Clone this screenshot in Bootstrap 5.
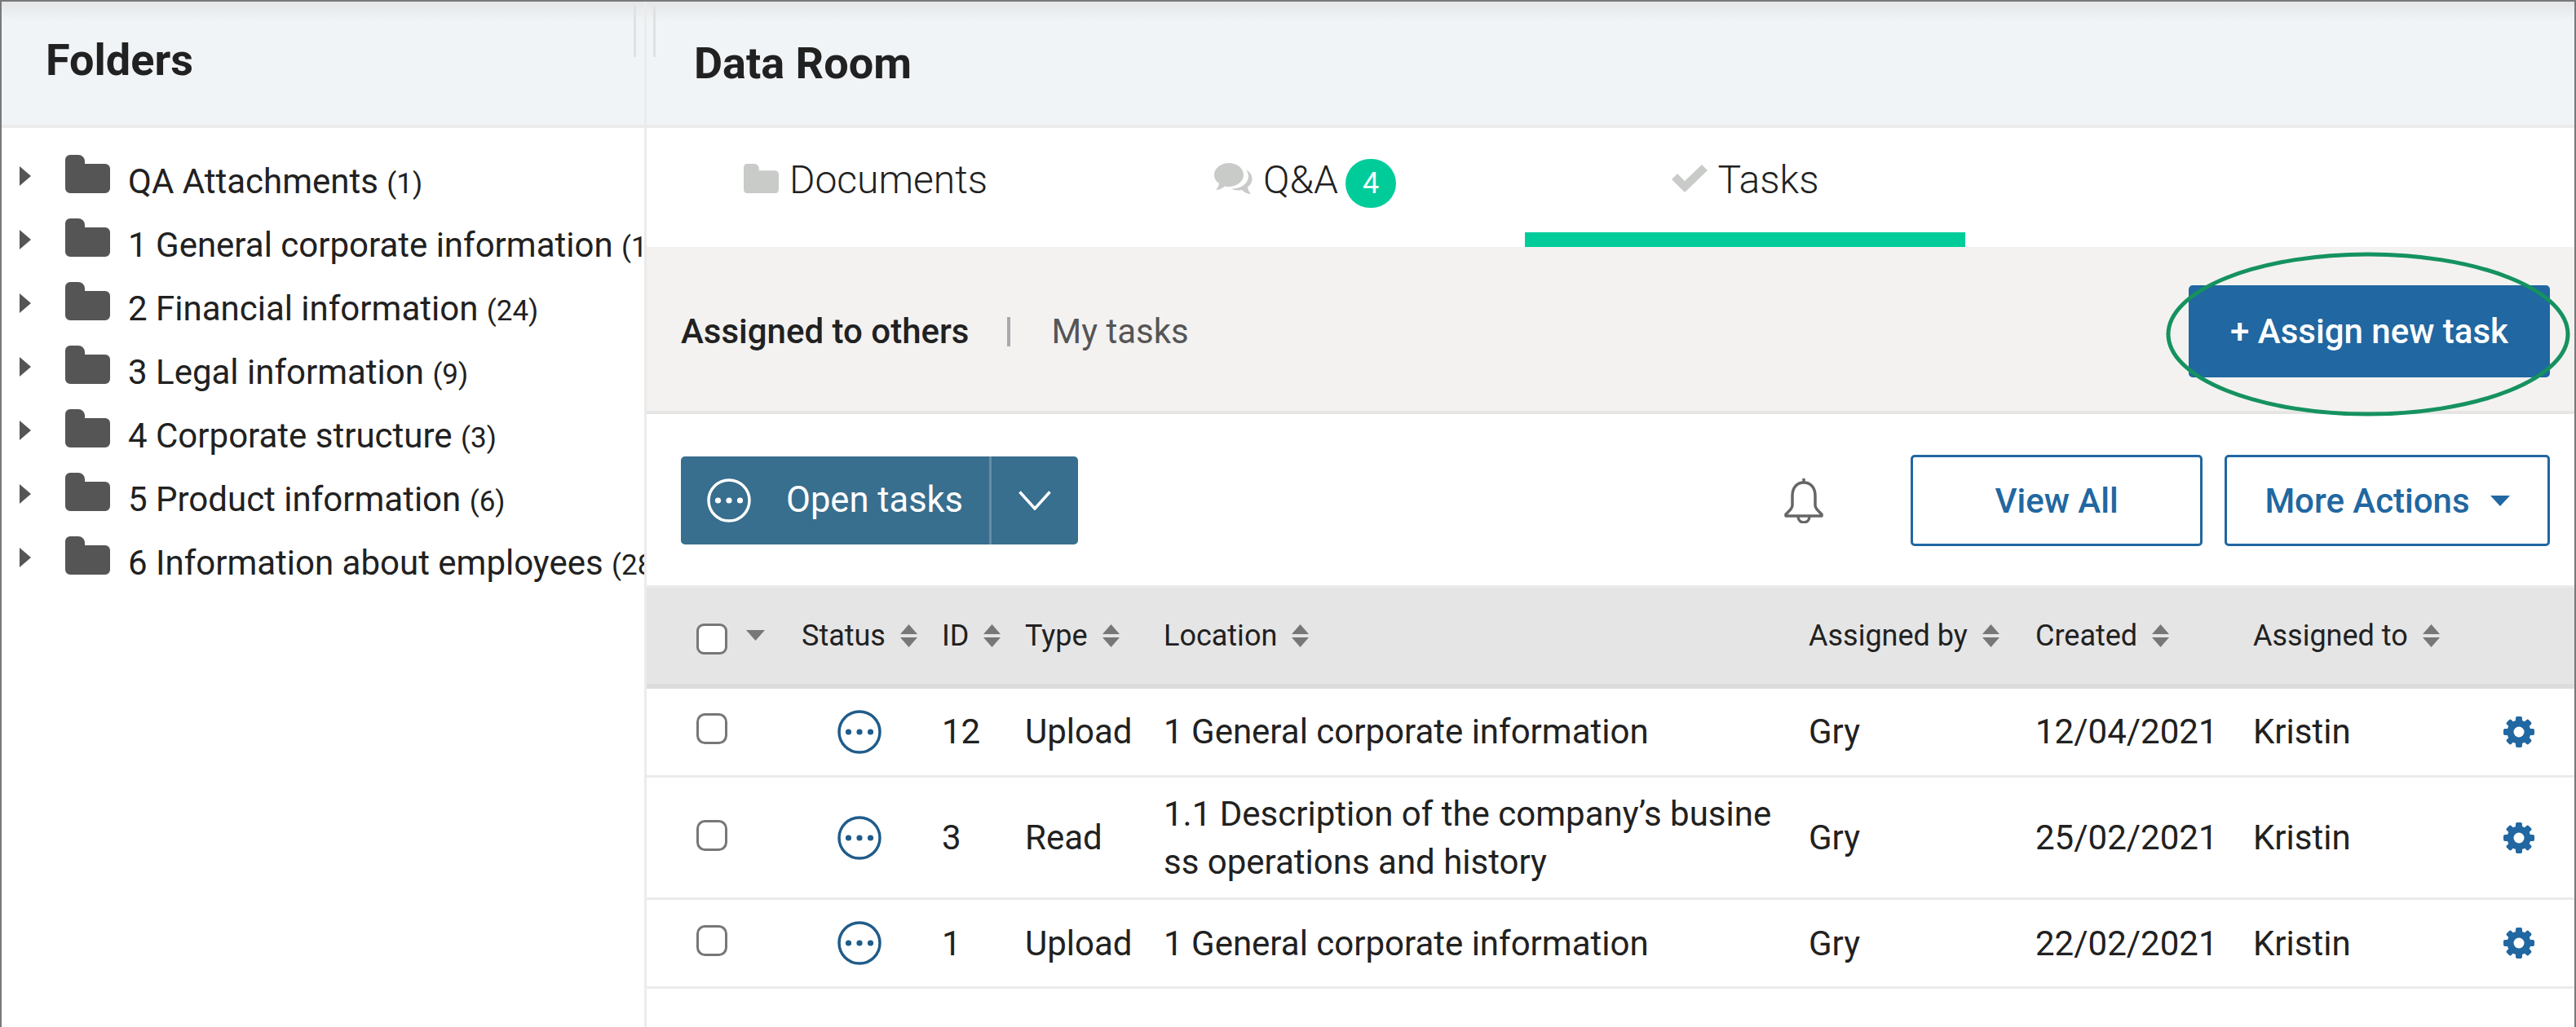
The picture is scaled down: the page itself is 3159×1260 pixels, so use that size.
<!DOCTYPE html>
<html lang="en">
<head>
    <meta charset="UTF-8">
    <title>Data Room</title>
    <link href="https://cdn.jsdelivr.net/npm/bootstrap@5.3.3/dist/css/bootstrap.min.css" rel="stylesheet">
    <style>
        html, body { height: 100%; }
        body {
            margin: 0;
            width: 3159px;
            font-family: Roboto, "Liberation Sans", sans-serif;
            font-size: 42px;
            color: #212121;
            background: #fff;
            overflow: hidden;
        }
        .app {
            height: 1260px;
            border: solid #77797c;
            border-width: 2px 2px 0 2px;
        }
        /* headers */
        .pane-head {
            height: 155px;
            background: linear-gradient(#e4e6e7 0, #f0f4f7 24px);
            border-bottom: 4px solid #ebebeb;
            position: relative;
        }
        .pane-head h1 { font-size: 54px; font-weight: 700; margin: 0; line-height: 1; }
        .folders { width: 791px; flex: none; border-right: 3px solid #ebebeb; }
        .folders .pane-head { padding: 45px 0 0 54px; }
        .main-pane { min-width: 0; }
        .main-pane .pane-head { padding: 49px 0 0 58px; }
        .grip { position: absolute; top: 6px; height: 62px; width: 3px; background: #dfe1e2; }
        .grip-a { right: 10px; }
        .grip-b { left: 8px; }

        /* tree */
        .tree { padding: 28px 0 0 0; margin: 0; list-style: none; }
        .tree li { height: 78px; display: flex; align-items: flex-start; white-space: nowrap; overflow: hidden; }
        .tree .arrow { width: 14px; height: 24px; margin: 19px 0 0 22px; flex: none; }
        .tree .folder { width: 55px; height: 47px; margin: 5px 0 0 42px; flex: none; }
        .tree .name { margin-left: 22px; margin-top: 14px; line-height: 48px; font-size: 42px; }
        .tree small { font-size: 35px; }

        /* tabs */
        .tabs { height: 146px; }
        .tabs .nav-link {
            width: 540px;
            height: 146px;
            padding: 0;
            color: #212121;
            font-size: 48px;
            font-weight: 300;
            border-bottom: 18px solid transparent;
            gap: 13px;
        }
        .tabs .nav-item:first-child .nav-link { width: 537px; }
        .tabs .nav-link.active { border-bottom-color: #00cc9a; }
        .tabs .nav-link > svg { margin-top: -4px; }
        .tabs .badge {
            width: 62px;
            height: 60px;
            padding: 0;
            margin-left: -4px;
            margin-top: 8px;
            background: #00cc9a;
            font-size: 36px;
            font-weight: 400;
            line-height: 60px;
        }

        /* sub bar */
        .subbar {
            height: 205px;
            background: #f3f2f1;
            border-bottom: 4px solid #e6e5e4;
            padding: 6px 30px 0 42px;
        }
        .subbar .on { font-weight: 500; }
        .subbar .off { color: #555; }
        .subbar .sep { width: 4px; height: 36px; background: #a9a9ad; margin: 0 50px 0 47px; }
        .btn-assign {
            width: 443px;
            height: 113px;
            padding: 0;
            background: #2167a1;
            border: 0;
            border-radius: 5px;
            color: #fff;
            font-size: 42px;
            font-weight: 500;
        }
        .assign-wrap { position: relative; }
        .ring { position: absolute; left: -27px; top: -40px; width: 494px; height: 200px; overflow: visible; pointer-events: none; }

        /* toolbar */
        .toolbar { height: 210px; padding: 2px 30px 0 42px; }
        .btn-open { background: #386e8e; color: #fff; border: 0; height: 108px; font-size: 43.500px; border-radius: 5px 0 0 5px; padding: 0 0 0 32px; width: 379px; justify-content: flex-start; gap: 43px; }
        .btn-open-toggle { background: #386e8e; border: 0; border-left: 3px solid #668ca6; width: 109px; height: 108px; border-radius: 0 5px 5px 0; padding: 0; }
        .btn-line {
            height: 112px;
            background: #fff;
            color: #2167a1;
            border: 3px solid #2167a1;
            border-radius: 5px;
            font-size: 42px;
            font-weight: 500;
            padding: 0;
        }
        .btn-line:hover { color: #2167a1; }
        .btn-view { width: 358px; margin-left: 104px; }
        .btn-more { width: 399px; margin-left: 27px; gap: 25px; }
        .bell { width: 54px; height: 56px; }

        /* table */
        .tasks { table-layout: fixed; width: 100%; margin: 0; }
        .tasks > :not(caption) > * > * { padding: 0; border-bottom: 3px solid #ebebeb; box-shadow: none; vertical-align: middle; color: #212121; }
        .tasks thead th {
            height: 122px;
            background: #e5e5e5;
            border-top: 3px solid #ebebeb;
            border-bottom: 6px solid #dcdcdc;
            font-size: 36px;
            font-weight: 400;
        }
        .tasks tbody td { font-size: 42px; line-height: 59px; }
        .tasks .row-a { height: 109px; }
        .tasks .row-b { height: 150px; }
        .tasks tbody tr:first-child { height: 111px; }
        .c-check { width: 190px; }
        .c-status { width: 172px; }
        .c-id { width: 102px; }
        .c-type { width: 170px; }
        .c-loc { width: 791px; }
        .c-by { width: 278px; }
        .c-created { width: 267px; }
        .c-to { width: 296px; }
        .tick {
            width: 38px;
            height: 38px;
            margin: 0 0 0 61px;
            border: 3px solid #777;
            border-radius: 7px;
            float: none;
            display: block;
        }
        thead .tick { margin-top: 8px; }
        tbody .tick { margin-top: -6px; }
        tbody tr:first-child .tick { margin-top: -8px; }
        .caret-all { width: 23px; height: 13px; margin-left: 23px; }
        .sort { width: 21px; height: 28px; margin-left: 18px; flex: none; }
        .state { width: 54px; height: 54px; margin-left: 44px; display: block; }
        .cog { width: 38px; height: 38px; display: block; margin-left: 11px; }
    </style>
</head>
<body>
    <svg width="0" height="0" class="position-absolute">
        <defs>
            <symbol id="i-folder" viewBox="0 0 55 47">
                <path d="M0 6a6 6 0 0 1 6-6h10a8 8 0 0 1 8 8v3h25a6 6 0 0 1 6 6v24a6 6 0 0 1-6 6H6a6 6 0 0 1-6-6z"/>
            </symbol>
            <symbol id="i-sort" viewBox="0 0 21 28">
                <path d="M10.500 0 21 12H0zM0 16h21L10.500 28z"/>
            </symbol>
            <symbol id="i-dots" viewBox="0 0 54 54">
                <circle cx="27" cy="27" r="25" fill="none" stroke="currentColor" stroke-width="3.500"/>
                <circle cx="13.500" cy="27" r="3.600" fill="currentColor"/>
                <circle cx="27" cy="27" r="3.600" fill="currentColor"/>
                <circle cx="40.500" cy="27" r="3.600" fill="currentColor"/>
            </symbol>
            <symbol id="i-cog" viewBox="0 0 38 38">
                <g fill="#2167a1">
                    <circle cx="19" cy="19" r="14.500"/>
                    <rect x="15" y="0" width="8" height="38" rx="2"/>
                    <rect x="15" y="0" width="8" height="38" rx="2" transform="rotate(45 19 19)"/>
                    <rect x="15" y="0" width="8" height="38" rx="2" transform="rotate(90 19 19)"/>
                    <rect x="15" y="0" width="8" height="38" rx="2" transform="rotate(135 19 19)"/>
                </g>
                <circle cx="19" cy="19" r="6.500" fill="#fff"/>
            </symbol>
        </defs>
    </svg>

    <div class="app d-flex">
        <!-- Folders -->
        <aside class="folders">
            <div class="pane-head">
                <h1>Folders</h1>
                <span class="grip grip-a"></span>
            </div>
            <ul class="tree">
                <li><svg class="arrow" viewBox="0 0 14 24" fill="#555"><path d="M0 0l14 12L0 24z"/></svg><svg class="folder" fill="#555"><use href="#i-folder"/></svg><span class="name">QA Attachments <small>(1)</small></span></li>
                <li><svg class="arrow" viewBox="0 0 14 24" fill="#555"><path d="M0 0l14 12L0 24z"/></svg><svg class="folder" fill="#555"><use href="#i-folder"/></svg><span class="name">1 General corporate information <small>(11)</small></span></li>
                <li><svg class="arrow" viewBox="0 0 14 24" fill="#555"><path d="M0 0l14 12L0 24z"/></svg><svg class="folder" fill="#555"><use href="#i-folder"/></svg><span class="name">2 Financial information <small>(24)</small></span></li>
                <li><svg class="arrow" viewBox="0 0 14 24" fill="#555"><path d="M0 0l14 12L0 24z"/></svg><svg class="folder" fill="#555"><use href="#i-folder"/></svg><span class="name">3 Legal information <small>(9)</small></span></li>
                <li><svg class="arrow" viewBox="0 0 14 24" fill="#555"><path d="M0 0l14 12L0 24z"/></svg><svg class="folder" fill="#555"><use href="#i-folder"/></svg><span class="name">4 Corporate structure <small>(3)</small></span></li>
                <li><svg class="arrow" viewBox="0 0 14 24" fill="#555"><path d="M0 0l14 12L0 24z"/></svg><svg class="folder" fill="#555"><use href="#i-folder"/></svg><span class="name">5 Product information <small>(6)</small></span></li>
                <li><svg class="arrow" viewBox="0 0 14 24" fill="#555"><path d="M0 0l14 12L0 24z"/></svg><svg class="folder" fill="#555"><use href="#i-folder"/></svg><span class="name">6 Information about employees <small>(28)</small></span></li>
            </ul>
        </aside>

        <!-- Data room -->
        <main class="main-pane flex-grow-1">
            <div class="pane-head">
                <span class="grip grip-b"></span>
                <h1>Data Room</h1>
            </div>

            <ul class="nav tabs">
                <li class="nav-item">
                    <a class="nav-link d-flex align-items-center justify-content-center" href="#">
                        <svg width="43" height="38" viewBox="0 0 55 47" fill="#c9cbc9"><use href="#i-folder"/></svg>Documents
                    </a>
                </li>
                <li class="nav-item">
                    <a class="nav-link d-flex align-items-center justify-content-center" href="#">
                        <svg width="48" height="38" viewBox="0 0 48 38" fill="#c9cbc9">
                            <path d="M19 0c10 0 18 6.500 18 14.500S29 29 19 29c-2 0-3.500-.2-5-.6C11 31 7 33 3 33c2-2 3.500-4.500 4-8C3 22.500 1 19 1 14.500 1 6.500 9 0 19 0z"/>
                            <path d="M39 8c5 2 8.500 6 8.500 11.500 0 4-2 7.500-5.500 10 .5 3 1.500 6 4 8.500-4.500 0-8-2-11-5-1.500.4-3.500.6-5 .6-3 0-6-.7-8.500-2 10 .5 21-5 21.500-15 .2-3-1-6-3.500-8.600z"/>
                        </svg>Q&amp;A<span class="badge rounded-pill">4</span>
                    </a>
                </li>
                <li class="nav-item">
                    <a class="nav-link active d-flex align-items-center justify-content-center" href="#">
                        <svg width="44" height="34" viewBox="0 0 44 34" fill="#c9cbc9"><path d="M16 34 0 18l7-7 9 9L37 0l7 7z"/></svg>Tasks
                    </a>
                </li>
            </ul>

            <div class="subbar d-flex align-items-center">
                <span class="on">Assigned to others</span>
                <span class="sep"></span>
                <span class="off">My tasks</span>
                <div class="assign-wrap ms-auto">
                    <button class="btn btn-assign" type="button">+ Assign new task</button>
                    <svg class="ring" viewBox="0 0 494 200"><ellipse cx="247" cy="100" rx="245" ry="98" fill="none" stroke="#15925f" stroke-width="5"/></svg>
                </div>
            </div>

            <div class="toolbar d-flex align-items-center">
                <div class="btn-group">
                    <button class="btn btn-open d-flex align-items-center" type="button">
                        <svg width="54" height="54" class="flex-none"><use href="#i-dots"/></svg>Open tasks
                    </button>
                    <button class="btn btn-open-toggle" type="button" aria-label="Choose status">
                        <svg width="40" height="24" viewBox="0 0 40 24" fill="none" stroke="#fff" stroke-width="3.500"><path d="M1.500 1.500 20 22 38.500 1.500"/></svg>
                    </button>
                </div>
                <svg class="bell ms-auto" viewBox="0 0 54 56" fill="none" stroke="#666" stroke-width="3.500" stroke-linejoin="round">
                    <path d="M27 1v5"/>
                    <path d="M27 6c-9 0-14 7-14 16v12c0 4-4 7-8 11v2h44v-2c-4-4-8-7-8-11V22c0-9-5-16-14-16z"/>
                    <path d="M20 47c0 5 3 8 7 8s7-3 7-8"/>
                </svg>
                <a class="btn btn-line btn-view d-flex align-items-center justify-content-center" href="#">View All</a>
                <a class="btn btn-line btn-more d-flex align-items-center justify-content-center" href="#">More Actions
                    <svg width="24" height="13" viewBox="0 0 24 13" fill="#2167a1"><path d="M0 0h24L12 13z"/></svg>
                </a>
            </div>

            <table class="table tasks">
                <colgroup>
                    <col class="c-check"><col class="c-status"><col class="c-id"><col class="c-type"><col class="c-loc"><col class="c-by"><col class="c-created"><col class="c-to"><col>
                </colgroup>
                <thead>
                    <tr>
                        <th><div class="d-flex align-items-center"><input class="form-check-input tick" type="checkbox" aria-label="Select all"><svg class="caret-all" viewBox="0 0 23 13" fill="#777"><path d="M0 0h23L11.500 13z"/></svg></div></th>
                        <th><div class="d-flex align-items-center">Status<svg class="sort" fill="#777"><use href="#i-sort"/></svg></div></th>
                        <th><div class="d-flex align-items-center">ID<svg class="sort" fill="#777"><use href="#i-sort"/></svg></div></th>
                        <th><div class="d-flex align-items-center">Type<svg class="sort" fill="#777"><use href="#i-sort"/></svg></div></th>
                        <th><div class="d-flex align-items-center">Location<svg class="sort" fill="#777"><use href="#i-sort"/></svg></div></th>
                        <th><div class="d-flex align-items-center">Assigned by<svg class="sort" fill="#777"><use href="#i-sort"/></svg></div></th>
                        <th><div class="d-flex align-items-center">Created<svg class="sort" fill="#777"><use href="#i-sort"/></svg></div></th>
                        <th><div class="d-flex align-items-center">Assigned to<svg class="sort" fill="#777"><use href="#i-sort"/></svg></div></th>
                        <th></th>
                    </tr>
                </thead>
                <tbody>
                    <tr class="row-a">
                        <td><input class="form-check-input tick" type="checkbox" aria-label="Select"></td>
                        <td><svg class="state" style="color:#1f5c8a"><use href="#i-dots"/></svg></td>
                        <td>12</td><td>Upload</td><td>1 General corporate information</td><td>Gry</td><td>12/04/2021</td><td>Kristin</td>
                        <td><svg class="cog"><use href="#i-cog"/></svg></td>
                    </tr>
                    <tr class="row-b">
                        <td><input class="form-check-input tick" type="checkbox" aria-label="Select"></td>
                        <td><svg class="state" style="color:#1f5c8a"><use href="#i-dots"/></svg></td>
                        <td>3</td><td>Read</td><td>1.1 Description of the company’s busine<br>ss operations and history</td><td>Gry</td><td>25/02/2021</td><td>Kristin</td>
                        <td><svg class="cog"><use href="#i-cog"/></svg></td>
                    </tr>
                    <tr class="row-a">
                        <td><input class="form-check-input tick" type="checkbox" aria-label="Select"></td>
                        <td><svg class="state" style="color:#1f5c8a"><use href="#i-dots"/></svg></td>
                        <td>1</td><td>Upload</td><td>1 General corporate information</td><td>Gry</td><td>22/02/2021</td><td>Kristin</td>
                        <td><svg class="cog"><use href="#i-cog"/></svg></td>
                    </tr>
                </tbody>
            </table>
        </main>
    </div>

    <script src="https://cdn.jsdelivr.net/npm/bootstrap@5.3.3/dist/js/bootstrap.bundle.min.js"></script>
</body>
</html>
